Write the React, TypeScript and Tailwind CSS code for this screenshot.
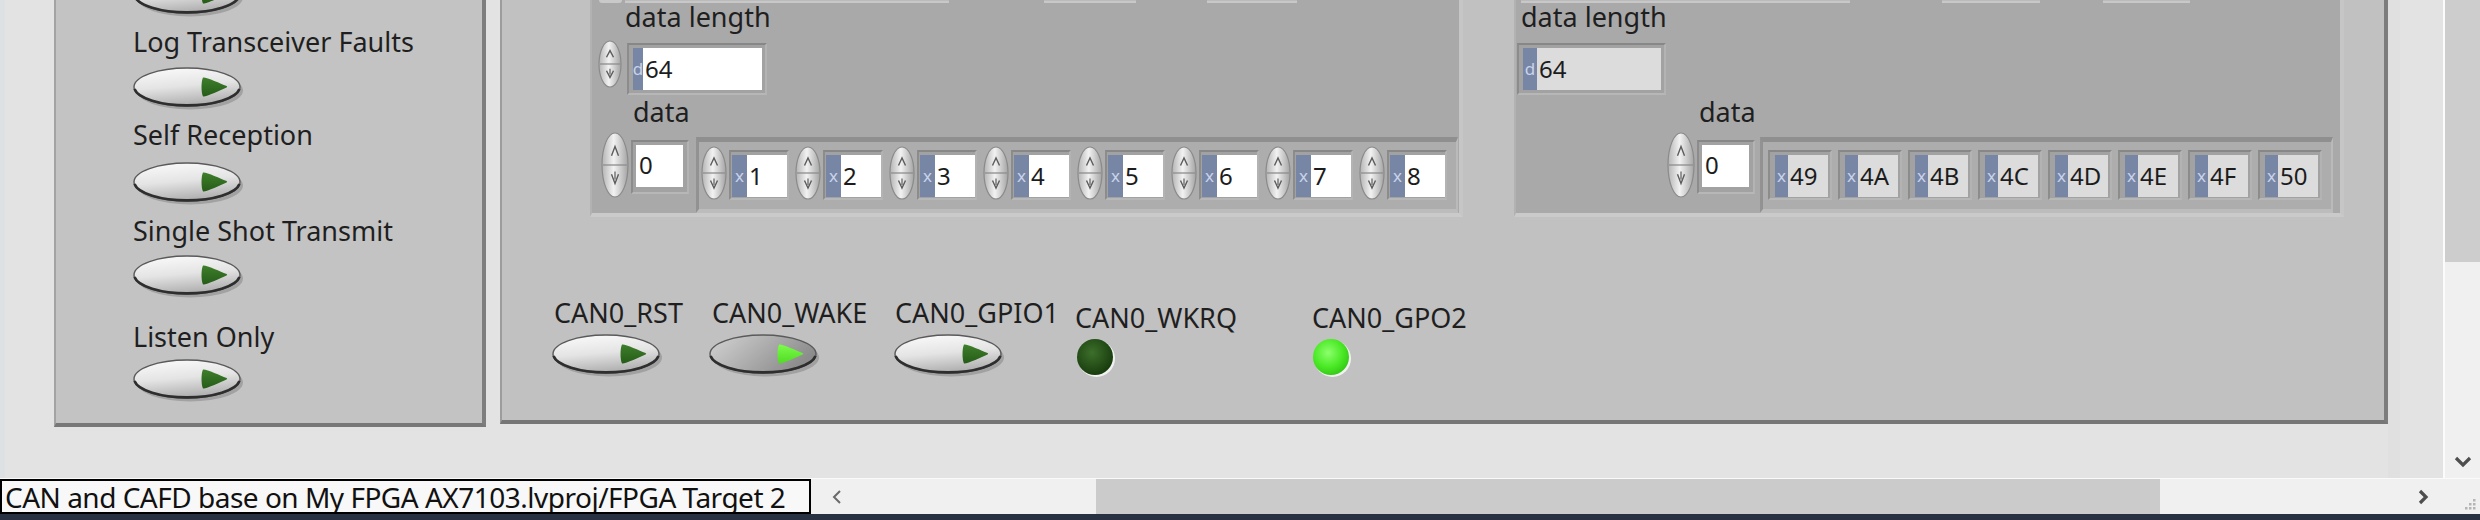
import React from "react";

const label = "text-[27px] leading-[27px] text-[#1f1f1f] whitespace-nowrap";
const sunken =
  "border-2 border-t-[#878787] border-l-[#8c8c8c] border-b-[#b7b7b7] border-r-[#b3b3b3] bg-[#a2a2a2]";

function Toggle({ on = false }: { on?: boolean }) {
  return (
    <svg width="112" height="44" viewBox="0 0 112 44" className="block shrink-0">
      <defs>
        <linearGradient id="tg-off" x1="0" y1="0" x2="0.25" y2="1">
          <stop offset="0" stopColor="#fcfcfc" />
          <stop offset="0.55" stopColor="#e4e4e4" />
          <stop offset="1" stopColor="#b3b3b3" />
        </linearGradient>
        <linearGradient id="tg-on" x1="0" y1="0" x2="1" y2="0.4">
          <stop offset="0" stopColor="#d4d4d4" />
          <stop offset="0.6" stopColor="#a9a9a9" />
          <stop offset="1" stopColor="#8c8c8c" />
        </linearGradient>
        <linearGradient id="tri-off" x1="0" y1="0" x2="0" y2="1">
          <stop offset="0" stopColor="#3f7f2c" />
          <stop offset="1" stopColor="#255c18" />
        </linearGradient>
        <linearGradient id="tri-on" x1="0" y1="0" x2="0" y2="1">
          <stop offset="0" stopColor="#7dfb4c" />
          <stop offset="1" stopColor="#4fdc22" />
        </linearGradient>
      </defs>
      <ellipse cx="57" cy="23.5" rx="53" ry="19" fill="#7a7a7a" opacity="0.45" />
      <ellipse
        cx="54"
        cy="20"
        rx="53"
        ry="19"
        fill={on ? "url(#tg-on)" : "url(#tg-off)"}
        stroke="#5a5a5a"
        strokeWidth="1.4"
      />
      <path d="M1.5 22 A53 19 0 0 0 106.5 22" fill="none" stroke="#2e2e2e" strokeWidth="2.6" />
      <path
        d="M70 10.5 C68 14 68 26 70 29.5 C72 30.5 88 23 93 20.8 C94.5 20 94.5 19.5 93 18.8 C88 16.5 72 9.5 70 10.5 Z"
        fill={on ? "url(#tri-on)" : "url(#tri-off)"}
      />
    </svg>
  );
}

function Spinner({ w, h }: { w: number; h: number }) {
  const cx = w / 2;
  const cy = h / 2;
  return (
    <svg width={w} height={h} viewBox={`0 0 ${w} ${h}`} className="block shrink-0">
      <defs>
        <linearGradient id="sp-g" x1="0" y1="0" x2="1" y2="0">
          <stop offset="0" stopColor="#b4b4b4" />
          <stop offset="0.45" stopColor="#f2f2f2" />
          <stop offset="1" stopColor="#a4a4a4" />
        </linearGradient>
      </defs>
      <ellipse cx={cx} cy={cy} rx={cx - 1} ry={cy - 1} fill="url(#sp-g)" stroke="#8a8a8a" strokeWidth="1.2" />
      <line x1="2" x2={w - 2} y1={cy} y2={cy} stroke="#8d8d8d" strokeWidth="1.3" />
      <path
        d={`M${cx - 3.5} ${h * 0.36} L${cx} ${h * 0.22} L${cx + 3.5} ${h * 0.36}`}
        fill="none"
        stroke="#5c5c5c"
        strokeWidth="1.4"
      />
      <path
        d={`M${cx - 3.5} ${h * 0.64} L${cx} ${h * 0.78} L${cx + 3.5} ${h * 0.64}`}
        fill="none"
        stroke="#5c5c5c"
        strokeWidth="1.4"
      />
      <line x1={cx} x2={cx} y1={h * 0.6} y2={h * 0.72} stroke="#5c5c5c" strokeWidth="1.2" />
    </svg>
  );
}

function Led({ on = false }: { on?: boolean }) {
  return (
    <svg width="40" height="40" viewBox="0 0 40 40" className="block shrink-0">
      <defs>
        <radialGradient id="led-off" cx="0.42" cy="0.38" r="0.65">
          <stop offset="0" stopColor="#3d6f2b" />
          <stop offset="1" stopColor="#163a0c" />
        </radialGradient>
        <radialGradient id="led-on" cx="0.42" cy="0.38" r="0.65">
          <stop offset="0" stopColor="#8cff6c" />
          <stop offset="0.6" stopColor="#4cea27" />
          <stop offset="1" stopColor="#33c915" />
        </radialGradient>
      </defs>
      <circle cx="20.5" cy="20.5" r="18.5" fill="#f1f1f1" />
      <circle cx="19" cy="19" r="18" fill={on ? "url(#led-on)" : "url(#led-off)"} />
    </svg>
  );
}

function Field({
  radix,
  value,
  band,
  box,
}: {
  radix: string;
  value: string;
  band: string;
  box: string;
}) {
  return (
    <div className="flex h-[42px]">
      <div
        className={`${band} h-full bg-[#7886a6] text-[#c9d3ea] text-[17px] leading-[42px] flex justify-center overflow-hidden`}
      >
        {radix}
      </div>
      <div className={`${box} h-full text-[24px] leading-[42px] text-[#1c1c1c] pl-[2px] overflow-hidden`}>
        {value}
      </div>
    </div>
  );
}

function LeftCluster() {
  const items = ["1", "2", "3", "4", "5", "6", "7", "8"];
  return (
    <div className="w-[873px] h-[217px] shrink-0 bg-[#a9a9a9] border-l-2 border-l-[#b2b2b2] border-r-4 border-r-[#c6c6c6] border-b-4 border-b-[#cacaca] flex flex-col">
      <div className="flex h-[3px]">
        <div className="ml-[7px] w-[23px] h-full bg-[#c9c9c9] rounded-b-full" />
        <div className="ml-[3px] w-[324px] h-full bg-[#bbbbbb] border-b-2 border-[#c8c8c8]" />
        <div className="ml-[95px] w-[92px] h-full bg-[#bbbbbb] border-b-2 border-[#c8c8c8]" />
        <div className="ml-[71px] w-[90px] h-full bg-[#bbbbbb] border-b-2 border-[#c8c8c8]" />
      </div>
      <div className={`${label} ml-[33px]`}>data length</div>
      <div className="flex items-start mt-[10px]">
        <div className="ml-[6px]">
          <Spinner w={24} h={48} />
        </div>
        <div className={`${sunken} ml-[5px] mt-[3px] w-[140px] h-[52px] pl-[4px] pt-[3px]`}>
          <Field radix="d" value="64" band="w-[10px]" box="w-[119px] bg-white" />
        </div>
      </div>
      <div className={`${label} mt-[3px] ml-[41px]`}>data</div>
      <div className="flex items-start mt-[7px]">
        <div className="ml-[9px]">
          <Spinner w={28} h={66} />
        </div>
        <div className={`${sunken} ml-[2px] mt-[8px] w-[58px] h-[54px] pl-[3px] pt-[3px]`}>
          <div className="w-[47px] h-[42px] bg-white text-[24px] leading-[40px] pl-[3px] text-[#1c1c1c]">0</div>
        </div>
        <div className="ml-[7px] mt-[5px] w-[762px] h-[76px] bg-[#adadad] border-t-[5px] border-t-[#8f8f8f] border-l-[3px] border-l-[#929292] border-r-2 border-r-[#bababa] border-b-4 border-b-[#bcbcbc] flex items-start gap-[6px] pl-[2px] pt-[4px]">
          {items.map((v) => (
            <div key={v} className="flex items-start">
              <Spinner w={26} h={54} />
              <div className={`${sunken} ml-[2px] mt-[4px] w-[60px] h-[50px] pl-[1px] pt-[3px]`}>
                <Field radix="x" value={v} band="w-[15px]" box="w-[40px] bg-white" />
              </div>
            </div>
          ))}
        </div>
      </div>
    </div>
  );
}

function RightCluster() {
  const items = ["49", "4A", "4B", "4C", "4D", "4E", "4F", "50"];
  return (
    <div className="ml-[51px] w-[830px] h-[217px] shrink-0 bg-[#a9a9a9] border-l-2 border-l-[#b2b2b2] border-r-4 border-r-[#c6c6c6] border-b-4 border-b-[#cacaca] flex flex-col">
      <div className="flex h-[3px]">
        <div className="ml-[5px] w-[329px] h-full bg-[#bbbbbb] border-b-2 border-[#c8c8c8]" />
        <div className="ml-[92px] w-[98px] h-full bg-[#bbbbbb] border-b-2 border-[#c8c8c8]" />
        <div className="ml-[63px] w-[87px] h-full bg-[#bbbbbb] border-b-2 border-[#c8c8c8]" />
      </div>
      <div className={`${label} ml-[5px]`}>data length</div>
      <div className={`${sunken} ml-[1px] mt-[13px] w-[149px] h-[52px] pl-[4px] pt-[3px]`}>
        <Field radix="d" value="64" band="w-[14px]" box="w-[124px] bg-[#dcdcdc]" />
      </div>
      <div className={`${label} mt-[3px] ml-[183px]`}>data</div>
      <div className="flex items-start mt-[7px]">
        <div className="ml-[151px]">
          <Spinner w={28} h={66} />
        </div>
        <div className={`${sunken} ml-[2px] mt-[8px] w-[58px] h-[54px] pl-[3px] pt-[3px]`}>
          <div className="w-[47px] h-[42px] bg-white text-[24px] leading-[40px] pl-[3px] text-[#1c1c1c]">0</div>
        </div>
        <div className="ml-[5px] mt-[5px] w-[573px] h-[76px] bg-[#adadad] border-t-[5px] border-t-[#8f8f8f] border-l-[3px] border-l-[#929292] border-r-2 border-r-[#bababa] border-b-4 border-b-[#bcbcbc] flex items-start gap-[6px] pl-[5px] pt-[8px]">
          {items.map((v) => (
            <div key={v} className={`${sunken} w-[64px] h-[50px] pl-[5px] pt-[3px]`}>
              <Field radix="x" value={v} band="w-[13px]" box="w-[40px] bg-[#dcdcdc]" />
            </div>
          ))}
        </div>
      </div>
    </div>
  );
}

function LeftPanel() {
  return (
    <div className="w-[432px] h-[427px] shrink-0 bg-[#c3c3c3] border-l-2 border-l-[#a3a3a3] border-r-4 border-r-[#7e7e7e] border-b-4 border-b-[#787878] flex flex-col items-start pl-[77px] overflow-hidden">
      <div className="mt-[-26px]">
        <Toggle />
      </div>
      <div className={`${label} mt-[10px]`}>Log Transceiver Faults</div>
      <div className="mt-[12px]">
        <Toggle />
      </div>
      <div className={`${label} mt-[10px]`}>Self Reception</div>
      <div className="mt-[14px]">
        <Toggle />
      </div>
      <div className={`${label} mt-[11px]`}>Single Shot Transmit</div>
      <div className="mt-[11px]">
        <Toggle />
      </div>
      <div className={`${label} mt-[24px]`}>Listen Only</div>
      <div className="mt-[9px]">
        <Toggle />
      </div>
    </div>
  );
}

function MainPanel() {
  return (
    <div className="w-[1888px] h-[424px] shrink-0 bg-[#c1c1c1] border-l-2 border-l-[#9c9c9c] border-r-4 border-r-[#7c7c7c] border-b-4 border-b-[#767676] flex flex-col">
      <div className="flex items-start pl-[88px] h-[217px]">
        <LeftCluster />
        <RightCluster />
      </div>
      <div className="flex items-start mt-[82px] pl-[50px]">
        <div className="w-[157px] flex flex-col items-start">
          <div className={`${label} ml-[2px]`}>CAN0_RST</div>
          <div className="mt-[8px]">
            <Toggle />
          </div>
        </div>
        <div className="w-[185px] flex flex-col items-start">
          <div className={`${label} ml-[3px]`}>CAN0_WAKE</div>
          <div className="mt-[8px]">
            <Toggle on />
          </div>
        </div>
        <div className="w-[181px] flex flex-col items-start">
          <div className={`${label} ml-[1px]`}>CAN0_GPIO1</div>
          <div className="mt-[8px]">
            <Toggle />
          </div>
        </div>
        <div className="w-[237px] flex flex-col items-start mt-[5px]">
          <div className={label}>CAN0_WKRQ</div>
          <div className="mt-[7px] ml-[1px]">
            <Led />
          </div>
        </div>
        <div className="flex flex-col items-start mt-[5px]">
          <div className={label}>CAN0_GPO2</div>
          <div className="mt-[7px]">
            <Led on />
          </div>
        </div>
      </div>
    </div>
  );
}

function Chevron({ dir }: { dir: "left" | "right" | "down" }) {
  const d =
    dir === "left" ? "M9 3 L3 9 L9 15" : dir === "right" ? "M3 3 L9 9 L3 15" : "M2 4 L9 11 L16 4";
  const w = dir === "down" ? 18 : 12;
  const h = dir === "down" ? 14 : 18;
  return (
    <svg width={w} height={h} viewBox={`0 0 ${w} ${h}`} className="block shrink-0">
      <path d={d} fill="none" stroke={dir === "left" ? "#6a6a6a" : "#4e4e4e"} strokeWidth={dir === "left" ? 2 : 3.2} />
    </svg>
  );
}

function VScroll() {
  return (
    <div className="w-[37px] h-full shrink-0 border-l-2 border-l-[#fbfbfb] bg-[#f0f0f0] flex flex-col">
      <div className="h-[262px] bg-[#cdcdcd]" />
      <div className="flex-1 flex flex-col justify-end items-center pb-[10px]">
        <Chevron dir="down" />
      </div>
    </div>
  );
}

function StatusBar() {
  return (
    <div className="h-[36px] flex bg-[#f0f0f0] border-t border-t-[#fafafa]">
      <div className="w-[811px] h-full shrink-0 border-2 border-black bg-[#f8f8f8] text-[28px] tracking-[-0.5px] leading-none text-[#111] flex items-center pl-[3px] whitespace-nowrap overflow-hidden">
        CAN and CAFD base on My FPGA AX7103.lvproj/FPGA Target 2
      </div>
      <div className="w-[285px] h-full shrink-0 flex items-center pl-[20px]">
        <Chevron dir="left" />
      </div>
      <div className="w-[1064px] h-full shrink-0 bg-[#cbcbcb]" />
      <div className="w-[283px] h-full shrink-0 flex items-center justify-end pr-[14px]">
        <Chevron dir="right" />
      </div>
      <div className="w-[37px] h-full shrink-0 flex items-end justify-end pr-[3px] pb-[3px]">
        <svg width="14" height="14" viewBox="0 0 14 14" className="block">
          <g fill="#b5b5b5">
            <rect x="10" y="2" width="2.5" height="2.5" />
            <rect x="6" y="6" width="2.5" height="2.5" />
            <rect x="10" y="6" width="2.5" height="2.5" />
            <rect x="2" y="10" width="2.5" height="2.5" />
            <rect x="6" y="10" width="2.5" height="2.5" />
            <rect x="10" y="10" width="2.5" height="2.5" />
          </g>
        </svg>
      </div>
    </div>
  );
}

export default function App() {
  return (
    <div className="w-[2480px] h-[520px] overflow-hidden flex flex-col bg-[#e3e3e3] font-['Noto_Sans',sans-serif]">
      <div className="flex h-[478px] shrink-0">
        <div className="w-[54px] shrink-0 border-l-[5px] border-l-[#dde1e4]" />
        <LeftPanel />
        <div className="w-[14px] shrink-0" />
        <MainPanel />
        <div className="w-[55px] shrink-0 border-l-[12px] border-l-[#e0e0e0]" />
        <VScroll />
      </div>
      <StatusBar />
      <div className="h-[6px] shrink-0 bg-[#283141]" />
    </div>
  );
}
